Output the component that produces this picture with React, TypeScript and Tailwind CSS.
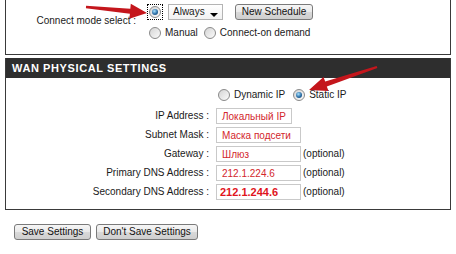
import React from 'react';

const Radio = ({ checked = false }: { checked?: boolean }) => (
  <span className="flex h-[12px] w-[12px] shrink-0 items-center justify-center rounded-full border border-[#8a8a8a] bg-[linear-gradient(135deg,#d4d4d4,#fbfbfb)]">
    {checked && (
      <span className="h-[6px] w-[6px] rounded-full bg-[radial-gradient(circle_at_40%_35%,#a8e2ff,#2b6ea6_55%,#123e66)]" />
    )}
  </span>
);

const Btn = ({ label, w }: { label: string; w: string }) => (
  <button
    className={`h-[16px] ${w} rounded-[3px] border border-[#7a7a7a] bg-[linear-gradient(#f6f6f6,#e9e9e9_50%,#d9d9d9_51%,#cfcfcf)] text-[10px] leading-[14px] text-[#111]`}
  >
    {label}
  </button>
);

interface Row {
  label: string;
  value: string;
  narrow?: boolean;
  bold?: boolean;
  optional?: boolean;
}

const rows: Row[] = [
  { label: 'IP Address :', value: 'Локальный IP', narrow: true },
  { label: 'Subnet Mask :', value: 'Маска подсети' },
  { label: 'Gateway :', value: 'Шлюз', optional: true },
  { label: 'Primary DNS Address :', value: ' 212.1.224.6', optional: true },
  { label: 'Secondary DNS Address :', value: '212.1.244.6', bold: true, optional: true },
];

export default function App() {
  return (
    <div className="relative h-[254px] w-[456px] overflow-hidden bg-white font-['Liberation_Sans',Arial,sans-serif] text-[10px] text-[#1a1a1a]">
      {/* connect mode box (top cut off) */}
      <div className="ml-[5px] flex h-[55px] w-[446px] border-x border-b border-[#3a3a3a]">
        <div className="w-[130px] pt-[15px] text-right leading-[12px]">Connect mode select :</div>
        <div className="ml-[11px] pt-[3px]">
          <div className="flex h-[17px] items-center">
            <span className="border border-dotted border-black p-[1px]">
              <Radio checked />
            </span>
            <div className="relative ml-[5px] flex h-[16px] w-[55px] items-center border border-[#b4b4b4] bg-[linear-gradient(#ffffff,#f1f1f1)] pl-[4px]">
              Always
              <span className="absolute right-[4px] top-[8px] h-0 w-0 border-x-[4px] border-t-[4px] border-x-transparent border-t-black" />
            </div>
            <div className="ml-[12px]">
              <Btn label="New Schedule" w="w-[78px]" />
            </div>
          </div>
          <div className="mt-[7px] flex h-[12px] items-center pl-[2px] leading-[12px]">
            <Radio />
            <span className="ml-[4px]">Manual</span>
            <span className="ml-[6px]">
              <Radio />
            </span>
            <span className="ml-[4px]">Connect-on demand</span>
          </div>
        </div>
      </div>

      {/* WAN physical settings */}
      <div className="ml-[5px] mt-[3px] w-[446px] border-x border-b border-[#3a3a3a] pb-[9px]">
        <div className="h-[20px] bg-[#2e2e2e] pl-[6px] text-[11px] font-bold leading-[20px] tracking-[0.6px] text-white">
          WAN PHYSICAL SETTINGS
        </div>
        <div className="mt-[11px] flex h-[12px] items-center pl-[212px] leading-[12px]">
          <Radio />
          <span className="ml-[4px]">Dynamic IP</span>
          <span className="ml-[8px]">
            <Radio checked />
          </span>
          <span className="ml-[4px]">Static IP</span>
        </div>
        <div className="mt-[7px] grid grid-cols-[203px_auto_1fr] items-center gap-y-[3px]">
          {rows.map((r) => (
            <React.Fragment key={r.label}>
              <div className="text-right leading-[16px]">{r.label}</div>
              <div className="ml-[7px]">
                <div
                  className={`flex h-[16px] items-center border border-[#c9c9c9] bg-white text-[#d3262c] ${
                    r.narrow ? 'w-[76px]' : 'w-[85px]'
                  } ${r.bold ? 'pl-[3px] text-[11px] font-bold text-[#e0141c]' : 'pl-[5px] text-[10px]'}`}
                >
                  {r.value}
                </div>
              </div>
              <div className="pl-[2px] leading-[16px]">{r.optional ? '(optional)' : ''}</div>
            </React.Fragment>
          ))}
        </div>
      </div>

      <div className="mt-[14px] flex gap-[5px] pl-[14px]">
        <Btn label="Save Settings" w="w-[77px]" />
        <Btn label="Don't Save Settings" w="w-[102px]" />
      </div>

      {/* red annotation arrows */}
      <svg className="pointer-events-none absolute left-0 top-0" width="456" height="254" viewBox="0 0 456 254">
        <polygon points="86.1,5.8 130.3,8.8 130.8,3.8 147,13 129.4,18.8 129.9,13.8 85.9,8.2" fill="#c4161c" />
        <polygon points="377.4,68.1 326.8,86.4 328.5,91.1 309,90 323.5,76.9 325.2,81.6 376.6,65.9" fill="#c4161c" />
      </svg>
    </div>
  );
}
